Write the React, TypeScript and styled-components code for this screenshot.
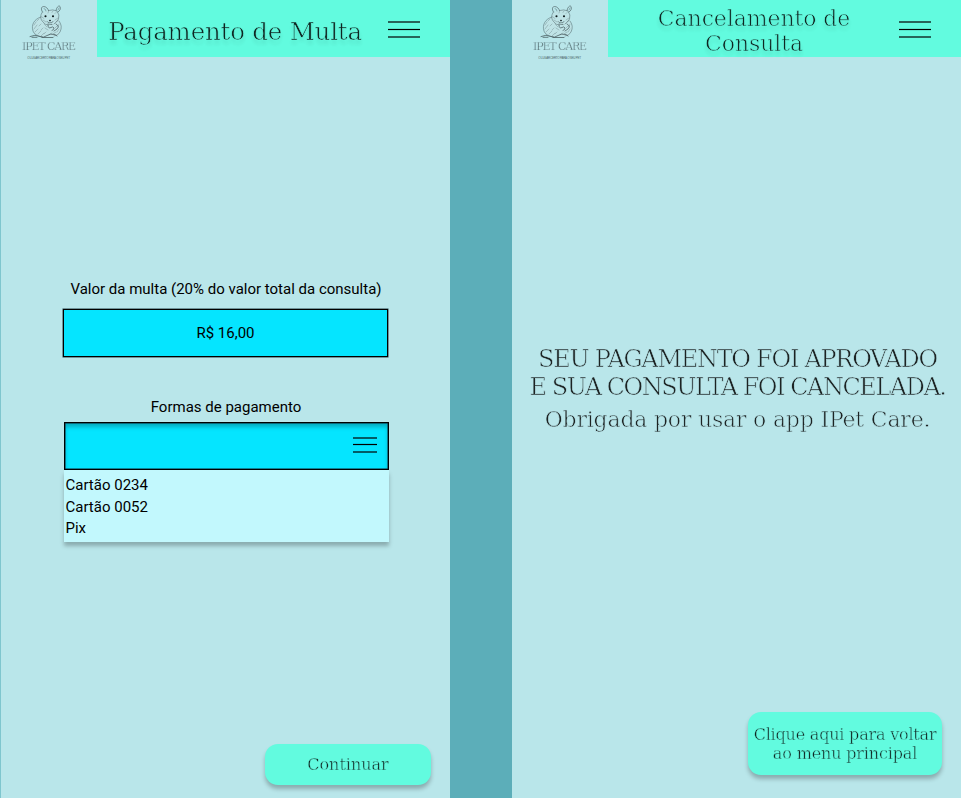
import React from "react";
import styled, { createGlobalStyle } from "styled-components";

const Global = createGlobalStyle`
  * { box-sizing: border-box; }
  body { margin: 0; background: #5caeb9; overflow: hidden; }
  button { border: 0; padding: 0; background: none; font: inherit; }
`;

const Board = styled.main`
  display: grid;
  grid-template-columns: 450px 449px;
  column-gap: 62px;
  width: 961px;
  height: 798px;
  background: #5caeb9;
`;

const Screen = styled.section<{ $edge?: boolean }>`
  display: flex;
  flex-direction: column;
  height: 798px;
  background: #b9e6ea;
  border-left: ${(p) => (p.$edge ? "1px solid #7fc6ce" : "0")};
`;

const Header = styled.header`
  display: flex;
  height: 57px;
  flex: none;
`;

const Brand = styled.div`
  display: flex;
  flex-direction: column;
  align-items: center;
  width: 96px;
  height: 64px;
  padding: 5px 1px 0 0;
  flex: none;
  svg { margin-right: 5px; }
`;

const slab = `
  font-family: "DejaVu Serif", serif;
  font-weight: 400;
  white-space: nowrap;
  will-change: opacity;
`;

const BrandName = styled.div`
  ${slab}
  margin-top: 1px;
  font-size: 11px;
  line-height: 14px;
  letter-spacing: -1.15px;
  color: #4d6468;
  opacity: 0.85;
  -webkit-text-stroke: 0.25px #b9e6ea;
`;

const BrandTag = styled.div`
  font: 3px/4px "Liberation Sans", sans-serif;
  letter-spacing: -0.27px;
  margin-top: 2px;
  color: #34484b;
  opacity: 0.8;
  white-space: nowrap;
`;

const Bar = styled.div`
  display: flex;
  flex: 1;
  background: #62fbdf;
`;

const Titles = styled.h1<{ $left: number; $width: number; $top: number }>`
  display: flex;
  flex-direction: column;
  align-items: center;
  width: ${(p) => p.$width}px;
  margin: ${(p) => p.$top}px 0 0 ${(p) => p.$left}px;
  flex: none;
`;

const Slab = styled.span<{ $size: number; $line: number; $track: number; $bg: string; $thin?: number; $shadow?: boolean }>`
  ${slab}
  display: block;
  font-size: ${(p) => p.$size}px;
  line-height: ${(p) => p.$line}px;
  letter-spacing: ${(p) => p.$track}px;
  color: #000;
  opacity: 0.85;
  -webkit-text-stroke: ${(p) => p.$thin ?? 0.65}px ${(p) => p.$bg};
  text-shadow: ${(p) => (p.$shadow ? "0 4px 4px rgba(0,0,0,0.12)" : "none")};
`;

const MenuButton = styled.button<{ $left: number; $top: number }>`
  display: block;
  margin: ${(p) => p.$top}px 0 0 ${(p) => p.$left}px;
  height: 18px;
  flex: none;
  svg { display: block; }
`;

const Form = styled.div`
  display: flex;
  flex-direction: column;
  width: 326px;
  margin: 222px 0 0 62px;
  font: 15px/20px Roboto, sans-serif;
  color: #000;
`;

const Label = styled.label`
  height: 20px;
  text-align: center;
  white-space: nowrap;
`;

const Amount = styled.output`
  display: flex;
  align-items: center;
  justify-content: center;
  width: 325px;
  height: 48px;
  margin: 10px 0 40px;
  padding-bottom: 1px;
  background: #05e5ff;
  border: 1px solid #000;
  box-shadow: 0 0 0 0.5px #26434a;
`;

const Select = styled.div`
  display: flex;
  justify-content: flex-end;
  width: 325px;
  height: 48px;
  margin: 5px 0 0 1px;
  padding-right: 11px;
  background: #05e5ff;
  border: 1px solid #000;
  box-shadow: inset 0 0 0 0.5px #123, inset 0 4px 4px rgba(0, 0, 0, 0.25);
`;

const Options = styled.ul`
  list-style: none;
  width: 325px;
  height: 72px;
  margin: 0 0 0 1px;
  padding: 5px 0 0 1.5px;
  background: #c2f8fd;
  box-shadow: 0 4px 4px rgba(0, 0, 0, 0.25);
  line-height: 21.6px;
`;

const Action = styled.button<{ $w: number; $h: number; $radius: number }>`
  display: flex;
  flex-direction: column;
  align-items: center;
  justify-content: center;
  width: ${(p) => p.$w}px;
  height: ${(p) => p.$h}px;
  background: #62fbdf;
  border-radius: ${(p) => p.$radius}px;
  box-shadow: 0 4px 4px rgba(0, 0, 0, 0.25);
`;

const Footer = styled.footer<{ $right: number; $bottom: number }>`
  display: flex;
  justify-content: flex-end;
  margin-top: auto;
  padding: 0 ${(p) => p.$right}px ${(p) => p.$bottom}px 0;
`;

const Message = styled.div`
  display: flex;
  flex-direction: column;
  align-items: center;
  margin-top: 288px;
  width: 451px;
`;

const MINT = "#62fbdf";
const PALE = "#b9e6ea";

function Lines({ width = 32 }: { width?: number }) {
  const small = width < 30;
  const ys = small ? [1, 7.5, 15] : [2, 9.5, 17];
  return (
    <svg width={width} height="18" viewBox={`0 0 ${width} 18`} stroke="#000" strokeWidth="1.2">
      {ys.map((y) => (
        <path key={y} d={`M0 ${y}H${width}`} />
      ))}
    </svg>
  );
}

function Hamster() {
  return (
    <svg width="36" height="34" viewBox="0 1 36 34" fill="none" stroke="#4a5e62" strokeWidth=".5" strokeLinecap="round">
      <path fill="#bfe3e6" stroke="none" d="M14 9Q20 4 28 7Q32 11 31 16L33 24L30 32L13 33L6 29L5 20L12 13Z" />
      <path d="M14.5 8C12.5 5 13.5 2.5 15.5 2.5C18 2.5 20 4.5 20.5 6.5M28 6.5C28.5 3 31 1 32 2.5C33 4.5 32 7 30 8" strokeWidth=".65" />
      <path d="M16 4.5Q18 5 18 7M30 6L31 4" strokeWidth=".8" opacity=".6" />
      <path d="M14.5 8C12 11 12 15 15 18Q17 21 20 21M20.5 6.5Q25 5 29 7Q32 11 30.5 15Q29 18 26 20" />
      <path d="M13 13C6 15 3 21 5 27C6 30 9 32 14 33" />
      <path d="M31 17Q35 22 32 28Q30 32 26 32" />
      <path d="M20 21Q20 25 23 23.5Q25 22 26 24Q26 26 24 26.5M28 20Q32 22 29 25L26 27" strokeWidth=".75" />
      <path d="M2 32.5Q7 30 12 32.5Q16 34 18 32Q22 29 27 30.5L29 32M14 33.5L25 33.5M4 33.3H9" strokeWidth=".8" />
      <path d="M6 21L8 18M6 25L9 21M7 28L10 25M10 30L13 27M13 32L16 29M9 17L11 15M16 30L18 28M11 22L13 20M13 26L15 24M21 31L24 29M25 30L28 28M29 28L31 25M30 23L31 20M27 24L29 22" strokeWidth=".45" opacity=".65" />
      <path d="M14 13L16 14.5M15 16L18 18M27 16L30 14M28 18L30 16.5M20 9L20.5 7.5M24 8.5L25 7M27 9.5L28 8.5M16 20L19 23M17 24L20 26" strokeWidth=".45" opacity=".65" />
      <path d="M19 17.5Q20 19.5 22 18Q24 20 25 17.5M20 20L24 20.5" strokeWidth=".7" />
      <g fill="#0b1517" stroke="none">
        <circle cx="17.5" cy="12.2" r="1.05" />
        <circle cx="25" cy="12.2" r="1.05" />
        <ellipse cx="22" cy="16.3" rx="1" ry=".6" />
      </g>
    </svg>
  );
}

function Logo() {
  return (
    <Brand>
      <Hamster />
      <BrandName>IPET CARE</BrandName>
      <BrandTag>O LUGAR CERTO PARA O SEU PET</BrandTag>
    </Brand>
  );
}

export default function App() {
  return (
    <>
      <Global />
      <Board>
        <Screen $edge>
          <Header>
            <Logo />
            <Bar>
              <Titles $left={8} $width={260} $top={15}>
                <Slab $size={24.5} $line={34} $track={-0.2} $bg={MINT} $shadow>Pagamento de Multa</Slab>
              </Titles>
              <MenuButton $left={23} $top={20} aria-label="Menu"><Lines /></MenuButton>
            </Bar>
          </Header>
          <Form>
            <Label>Valor da multa (20% do valor total da consulta)</Label>
            <Amount>R$ 16,00</Amount>
            <Label>Formas de pagamento</Label>
            <Select>
              <MenuButton $left={0} $top={14} aria-label="Abrir"><Lines width={24} /></MenuButton>
            </Select>
            <Options>
              <li>Cartão 0234</li>
              <li>Cartão 0052</li>
              <li>Pix</li>
            </Options>
          </Form>
          <Footer $right={19} $bottom={13}>
            <Action $w={166} $h={41} $radius={13}>
              <Slab $size={16} $line={20} $track={0} $bg={MINT} $thin={0.45}>Continuar</Slab>
            </Action>
          </Footer>
        </Screen>
        <Screen>
          <Header>
            <Logo />
            <Bar>
              <Titles $left={16} $width={260} $top={6}>
                <Slab $size={22} $line={25} $track={-0.1} $bg={MINT} $shadow>Cancelamento de</Slab>
                <Slab $size={22} $line={25} $track={-0.1} $bg={MINT} $shadow>Consulta</Slab>
              </Titles>
              <MenuButton $left={15} $top={20} aria-label="Menu"><Lines /></MenuButton>
            </Bar>
          </Header>
          <Message>
            <Slab $size={24} $line={28} $track={-1.28} $bg={PALE}>SEU PAGAMENTO FOI APROVADO</Slab>
            <Slab $size={24} $line={28} $track={-1.48} $bg={PALE}>E SUA CONSULTA FOI CANCELADA.</Slab>
            <Slab $size={22} $line={38} $track={-0.2} $bg={PALE}>Obrigada por usar o app IPet Care.</Slab>
          </Message>
          <Footer $right={19} $bottom={23}>
            <Action $w={194} $h={63} $radius={13}>
              <Slab $size={16} $line={19} $track={-0.2} $bg={MINT} $thin={0.45}>Clique aqui para voltar</Slab>
              <Slab $size={16} $line={19} $track={-0.15} $bg={MINT} $thin={0.45}>ao menu principal</Slab>
            </Action>
          </Footer>
        </Screen>
      </Board>
    </>
  );
}
